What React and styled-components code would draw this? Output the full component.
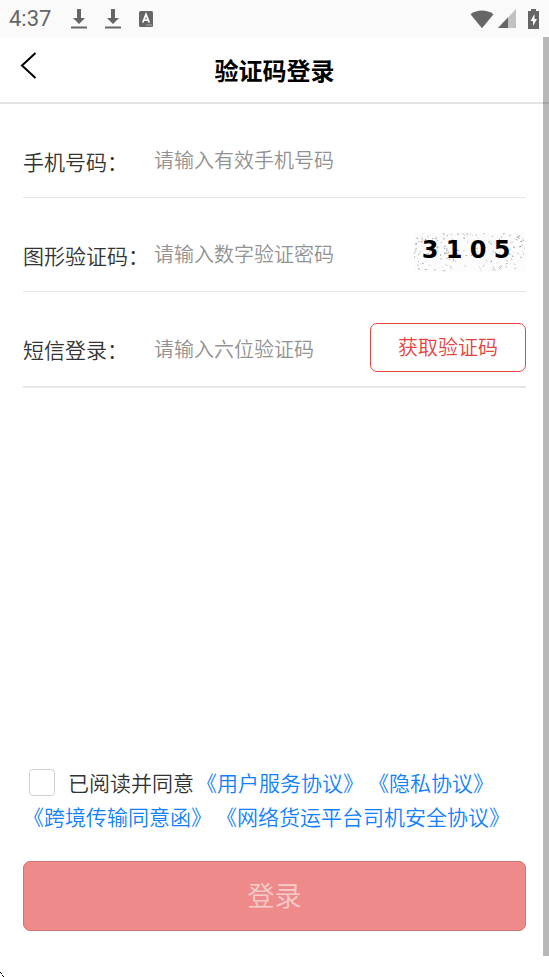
import { useState } from 'react';
import styled, { createGlobalStyle } from 'styled-components';

const GlobalStyle = createGlobalStyle`
  * {
    box-sizing: border-box;
  }

  body {
    margin: 0;
    background: #fff;
    color: #333;
    font-family: 'Noto Sans CJK SC', sans-serif;
    font-weight: 350;
  }

  input, button {
    font-family: inherit;
    font-weight: inherit;
  }
`;

const Screen = styled.div`
  position: relative;
  display: flex;
  flex-direction: column;
  min-height: 100vh;
  overflow: hidden;
`;

const StatusBar = styled.div`
  display: flex;
  align-items: center;
  justify-content: space-between;
  height: 37px;
  padding: 0 10px 0 9px;
  background: #fafafa;
  color: #666;
  font-family: Roboto, sans-serif;
  font-size: 22px;
  font-weight: 400;

  svg {
    display: block;
  }
`;

const StatusGroup = styled.div`
  display: flex;
  align-items: center;
  gap: ${props => props.$gap}px;
`;

const Clock = styled.span`
  margin-right: 2px;
`;

const Header = styled.header`
  display: grid;
  grid-template-columns: 48px 1fr 48px;
  align-items: center;
  height: 67px;
  border-bottom: 2px solid #e4e4e4;

  h1 {
    margin: 0;
    color: #000;
    font-size: 24px;
    font-weight: 700;
    line-height: 36px;
    text-align: center;
  }
`;

const BackButton = styled.button`
  padding: 0 0 8px 20px;
  border: 0;
  background: none;
  color: #000;

  svg {
    display: block;
  }
`;

const Form = styled.form`
  display: flex;
  flex: 1;
  flex-direction: column;
  padding: 0 23px 46px;
`;

const Field = styled.div`
  display: flex;
  align-items: center;
  height: ${props => (props.$last ? 96 : 94)}px;
  padding-top: 20px;
  border-bottom: ${props => (props.$last ? 2 : 1)}px solid #e6e6e6;

  label {
    width: 131px;
    flex-shrink: 0;
    font-size: 21px;
    line-height: 32px;
    white-space: nowrap;
  }
`;

const TextInput = styled.input`
  flex: 1;
  min-width: 0;
  height: 40px;
  padding: 0 0 2px;
  border: 0;
  outline: 0;
  background: none;
  color: #333;
  font-size: 20px;

  &::placeholder {
    color: #929292;
    opacity: 1;
  }
`;

const CaptchaButton = styled.button`
  margin-bottom: 4px;
  padding: 0;
  border: 0;
  background: none;

  svg {
    display: block;
  }

  text {
    font: bold 24px 'DejaVu Sans', sans-serif;
  }
`;

const CodeButton = styled.button`
  width: 156px;
  height: 49px;
  margin-bottom: 4px;
  padding: 0 0 2px;
  border: 1px solid #e64340;
  border-radius: 7px;
  background: #fff;
  color: #e64340;
  font-size: 20px;
`;

const Agreement = styled.div`
  display: flex;
  flex-wrap: wrap;
  align-items: center;
  margin-top: auto;
  margin-bottom: 28px;
  font-size: 21px;
  line-height: 34px;

  input {
    width: 26px;
    height: 27px;
    margin: 0 13px 0 6px;
    border: 1px solid #d1d1d1;
    border-radius: 4px;
    background: #fff;
    appearance: none;
  }

  input:checked {
    background: #1a88ff;
  }

  label {
    margin-right: 2px;
  }

  a {
    margin-right: 4px;
    color: #1080ff;
    text-decoration: none;
  }
`;

const SubmitButton = styled.button`
  height: 70px;
  padding: 0 0 4px;
  border: 1px solid #cf7474;
  border-radius: 7px;
  background: #ee8a89;
  color: #f9cccb;
  font-size: 27px;
`;

const ScrollThumb = styled.div`
  position: absolute;
  top: 37px;
  right: 0;
  bottom: 21px;
  width: 6px;
  background: rgba(0, 0, 0, 0.28);
`;

const CornerMark = styled.svg`
  position: absolute;
  bottom: 0;
  left: 0;
`;

const agreements = ['用户服务协议', '隐私协议', '跨境传输同意函', '网络货运平台司机安全协议'];

// small generator so the noise stays the same between renders
function makeSpecks(count) {
  let seed = 3105;
  const next = () => {
    seed = (seed * 16807) % 2147483647;
    return seed / 2147483647;
  };
  return Array.from({ length: count }, () => ({
    x: next() * 110,
    y: next() * 38,
    dx: next() * 2 - 1,
    dy: next() * 2 - 1,
    shade: 140 + Math.round(next() * 90),
  }));
}

const specks = makeSpecks(190);

function DownloadIcon() {
  return (
    <svg width='16' height='22' viewBox='0 0 16 22' fill='#666'>
      <path d='M6 1h4v9h4l-6 6-6-6h4z' />
      <path d='M0 18.500h16v2H0z' />
    </svg>
  );
}

function Captcha({ code }) {
  return (
    <svg width='112' height='39' viewBox='0 0 112 39' role='img' aria-label='图形验证码'>
      <rect width='112' height='39' fill='#fcfcfc' />
      {specks.map((s, i) => (
        <path
          key={i}
          d={`M${s.x} ${s.y}l${s.dx} ${s.dy}`}
          stroke={`rgb(${s.shade}, ${s.shade}, ${s.shade})`}
          strokeLinecap='round'
        />
      ))}
      {code.split('').map((digit, i) => (
        <text key={i} x={16 + i * 24} y='25' textAnchor='middle' fill='#000'>{digit}</text>
      ))}
    </svg>
  );
}

export default function App() {
  const [agreed, setAgreed] = useState(false);

  return (
    <Screen>
      <GlobalStyle />
      <StatusBar>
        <StatusGroup $gap={18}>
          <Clock>4:37</Clock>
          <DownloadIcon />
          <DownloadIcon />
          <svg width='14' height='16' viewBox='0 0 14 16'>
            <rect width='14' height='16' rx='1.5' fill='#666' />
            <path d='M3.800 11.500L7 3.500l3.200 8M5 9.200h4' stroke='#fff' strokeWidth='1.8' fill='none' />
            <path d='M7.500 14h1.200M9.500 14h1.200M11.500 14h1.200' stroke='#ddd' />
          </svg>
        </StatusGroup>
        <StatusGroup $gap={4}>
          <svg width='24' height='20' viewBox='0 0 24 20' fill='#666'>
            <path d='M.5 5.200C7 .2 17 .2 23.500 5.200L12 19.200z' />
          </svg>
          <svg width='18' height='19' viewBox='0 0 18 19'>
            <path d='M18 0v19H0z' fill='#c2c2c2' />
            <path d='M10 8.400V19H0z' fill='#666' />
          </svg>
          <svg width='19' height='22' viewBox='0 0 19 22'>
            <path d='M11 1h5v2H19v18H8V3h3z' fill='#666' />
            <path d='M14.500 6l-4 7h2.500v5l4-7h-2.500z' fill='#fff' />
          </svg>
        </StatusGroup>
      </StatusBar>

      <Header>
        <BackButton type='button' aria-label='返回'>
          <svg width='17' height='27' viewBox='0 0 17 27' fill='none' stroke='currentColor' strokeWidth='2'>
            <path d='M15.500 1L2 13.500l13.500 12.500' />
          </svg>
        </BackButton>
        <h1>验证码登录</h1>
      </Header>

      <Form onSubmit={e => e.preventDefault()}>
        <Field>
          <label htmlFor='phone'>手机号码：</label>
          <TextInput id='phone' type='tel' placeholder='请输入有效手机号码' />
        </Field>
        <Field>
          <label htmlFor='captcha'>图形验证码：</label>
          <TextInput id='captcha' placeholder='请输入数字验证密码' />
          <CaptchaButton type='button'>
            <Captcha code='3105' />
          </CaptchaButton>
        </Field>
        <Field $last>
          <label htmlFor='sms'>短信登录：</label>
          <TextInput id='sms' placeholder='请输入六位验证码' />
          <CodeButton type='button'>获取验证码</CodeButton>
        </Field>

        <Agreement>
          <input
            id='agree'
            type='checkbox'
            checked={agreed}
            onChange={e => setAgreed(e.target.checked)}
          />
          <label htmlFor='agree'>已阅读并同意</label>
          {agreements.map(name => (
            <a key={name} href='#'>《{name}》</a>
          ))}
        </Agreement>

        <SubmitButton type='submit'>登录</SubmitButton>
      </Form>

      <ScrollThumb />
      <CornerMark width='5' height='6' viewBox='0 0 5 6' fill='#000'>
        <path d='M0 1h1v1H0zM1 2h1v1H1zM2 4h1v1H2zM3 5h1v1H3z' />
      </CornerMark>
    </Screen>
  );
}
